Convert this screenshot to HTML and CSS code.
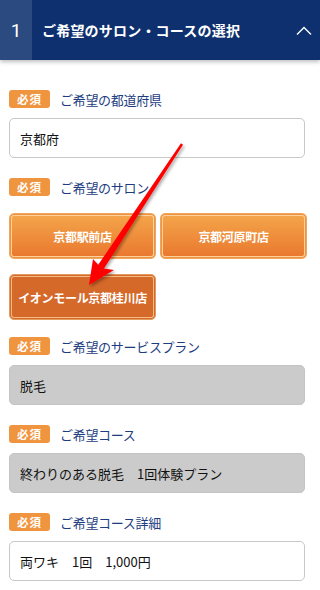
FILE: index.html
```html
<!DOCTYPE html>
<html lang="ja">
<head>
<meta charset="utf-8">
<link rel="stylesheet" href="styles.css">
</head>
<body>
<div class="page">
  <header class="head">
    <div class="num">1</div>
    <div class="title">ご希望のサロン・コースの選択</div>
    <svg class="chev" width="16" height="10" viewBox="0 0 16 10"><path d="M1 8.5 L8 1.5 L15 8.5" fill="none" stroke="#fff" stroke-width="1.4"/></svg>
  </header>
  <main class="form">
    <div class="field">
      <div class="label"><span class="req">必須</span><span class="ltext">ご希望の都道府県</span></div>
      <div class="box">京都府</div>
    </div>
    <div class="field">
      <div class="label"><span class="req">必須</span><span class="ltext">ご希望のサロン</span></div>
      <div class="btns">
        <div class="btn">京都駅前店</div>
        <div class="btn">京都河原町店</div>
        <div class="btn sel">イオンモール京都桂川店</div>
      </div>
    </div>
    <div class="field">
      <div class="label"><span class="req">必須</span><span class="ltext">ご希望のサービスプラン</span></div>
      <div class="box gray">脱毛</div>
    </div>
    <div class="field">
      <div class="label"><span class="req">必須</span><span class="ltext">ご希望コース</span></div>
      <div class="box gray">終わりのある脱毛　1回体験プラン</div>
    </div>
    <div class="field">
      <div class="label"><span class="req">必須</span><span class="ltext">ご希望コース詳細</span></div>
      <div class="box">両ワキ　1回　1,000円</div>
    </div>
  </main>
  <svg class="arrow" width="320" height="590" viewBox="0 0 320 590">
    <defs>
      <filter id="sh" x="-20%" y="-20%" width="140%" height="140%">
        <feDropShadow dx="1.5" dy="2" stdDeviation="1.5" flood-color="#000" flood-opacity="0.35"/>
      </filter>
    </defs>
    <polygon filter="url(#sh)" fill="#ff0000" points="181,143.3 98.2,264.8 93,259 89,285 114,270 104,268.6 183,144.7"/>
  </svg>
</div>
</body>
</html>
```

FILE: styles.css
```css
* { box-sizing: border-box; }
html, body { margin: 0; padding: 0; background: #fff; }
body { font-family: "Noto Sans CJK JP", "Noto Sans", sans-serif; width: 320px; }
.page { position: relative; width: 320px; height: 590px; overflow: hidden; }
.head {
  height: 60px;
  background: #0e306e;
  display: flex;
  align-items: center;
  color: #fff;
  box-shadow: 0 2px 4px rgba(0,0,0,0.25);
  position: relative;
  z-index: 1;
}
.num {
  width: 32px;
  height: 60px;
  background: #2b4a80;
  display: flex;
  align-items: center;
  justify-content: center;
  font-family: "Roboto", "Noto Sans", sans-serif;
  font-size: 19px;
}
.title {
  flex: 1;
  padding-left: 10px;
  font-size: 14px;
  font-weight: bold;
  letter-spacing: 0.2px;
}
.chev { margin-right: 8px; margin-top: 1px; }
.form {
  padding: 30px 0 0 9px;
  display: flex;
  flex-direction: column;
  gap: 20px;
}
.field { display: flex; flex-direction: column; gap: 10px; }
.label { display: flex; align-items: center; height: 18px; }
.req {
  width: 41px;
  height: 18px;
  background: #f0953f;
  color: #fff;
  border-radius: 3px;
  font-size: 11.5px;
  font-weight: bold;
  display: flex;
  align-items: center;
  justify-content: center;
  letter-spacing: 1px;
}
.ltext {
  margin-left: 10px;
  font-size: 13px;
  letter-spacing: -0.3px;
  color: #1d3d7f;
}
.box {
  width: 296px;
  height: 40px;
  border: 1px solid #c8c8c8;
  border-radius: 5px;
  display: flex;
  align-items: center;
  padding-left: 10px;
  font-size: 13px;
  color: #111;
}
.box.gray { background: #cbcbcb; border-color: #c4c4c4; }
.btns {
  display: grid;
  grid-template-columns: 147px 147px;
  column-gap: 4px;
  row-gap: 15px;
  margin-top: 7px;
  margin-bottom: -3px;
}
.btn {
  height: 46px;
  border-radius: 5px;
  border: 1px solid #f0a458;
  background: linear-gradient(#f4a64b, #e9772e);
  box-shadow: inset 0 0 0 1px #ef9445, inset 0 0 0 2px #fbd29e;
  color: #fff;
  font-size: 12px;
  font-weight: bold;
  letter-spacing: -0.3px;
  display: flex;
  align-items: center;
  justify-content: center;
}
.btn.sel { background: #d5692a; border-color: #e69a5a; box-shadow: inset 0 0 0 1px #d36a2d, inset 0 0 0 2px #f4bb85; }
.arrow { position: absolute; left: 0; top: 0; pointer-events: none; z-index: 2; }
```
